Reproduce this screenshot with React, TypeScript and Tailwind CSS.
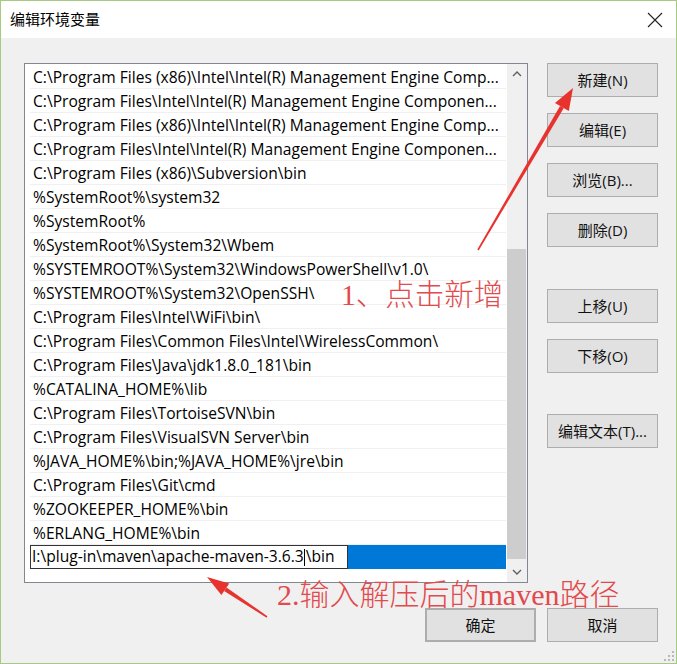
const rows = [
  "C:\\Program Files (x86)\\Intel\\Intel(R) Management Engine Comp...",
  "C:\\Program Files\\Intel\\Intel(R) Management Engine Componen...",
  "C:\\Program Files (x86)\\Intel\\Intel(R) Management Engine Comp...",
  "C:\\Program Files\\Intel\\Intel(R) Management Engine Componen...",
  "C:\\Program Files (x86)\\Subversion\\bin",
  "%SystemRoot%\\system32",
  "%SystemRoot%",
  "%SystemRoot%\\System32\\Wbem",
  "%SYSTEMROOT%\\System32\\WindowsPowerShell\\v1.0\\",
  "%SYSTEMROOT%\\System32\\OpenSSH\\",
  "C:\\Program Files\\Intel\\WiFi\\bin\\",
  "C:\\Program Files\\Common Files\\Intel\\WirelessCommon\\",
  "C:\\Program Files\\Java\\jdk1.8.0_181\\bin",
  "%CATALINA_HOME%\\lib",
  "C:\\Program Files\\TortoiseSVN\\bin",
  "C:\\Program Files\\VisualSVN Server\\bin",
  "%JAVA_HOME%\\bin;%JAVA_HOME%\\jre\\bin",
  "C:\\Program Files\\Git\\cmd",
  "%ZOOKEEPER_HOME%\\bin",
  "%ERLANG_HOME%\\bin",
];

const Btn = ({ label, className = "" }: { label: string; className?: string }) => (
  <button
    type="button"
    className={`flex h-[34px] w-[111px] items-center justify-center border border-[#adadad] bg-[#e1e1e1] text-[15px] text-[#111] ${className}`}
  >
    {label}
  </button>
);

export default function App() {
  return (
    <div
      className="relative flex h-[664px] w-[677px] flex-col border border-[#a5ca80] bg-[#f0f0f0]"
      style={{ fontFamily: '"Open Sans", "Noto Sans CJK SC", sans-serif' }}
    >
      {/* title bar */}
      <div className="flex h-[37px] items-center justify-between bg-white pl-[9px] pr-[13px]">
        <span className="text-[15px] text-black" style={{ fontFamily: '"Noto Sans CJK SC", sans-serif' }}>
          编辑环境变量
        </span>
        <svg width="16" height="16" viewBox="0 0 16 16">
          <path d="M1 1 L15 15 M15 1 L1 15" stroke="#222" strokeWidth="1.1" />
        </svg>
      </div>

      <div className="flex flex-col pl-[23px] pr-[18px] pt-[25px]">
        <div className="flex items-start gap-[19px]">
          {/* list box */}
          <div className="flex h-[520px] w-[504px] border border-[#828790] bg-white">
            <div className="flex flex-1 flex-col overflow-hidden pl-[5px] pr-[1px] pt-[1px]">
              {rows.map((r, i) => (
                <div
                  key={i}
                  className="h-[24px] overflow-hidden whitespace-nowrap border-b border-[#f0f0f0] pl-[3px] text-[15.6px] leading-[24px] text-black"
                >
                  {r}
                </div>
              ))}
              <div className="flex h-[24px] bg-[#0078d7]">
                <div className="flex h-[24px] w-[318px] items-center whitespace-nowrap border border-[#333] bg-white pl-[1px] text-[15.6px] text-black">
                  I:\plug-in\maven\apache-maven-3.6.3
                  <span className="mx-[0.5px] inline-block h-[17px] w-[1px] bg-black" />
                  \bin
                </div>
              </div>
            </div>
            {/* scrollbar */}
            <div className="flex w-[20px] flex-col bg-[#f0f0f0]">
              <div className="flex h-[20px] items-center justify-center">
                <svg width="10" height="6" viewBox="0 0 10 6">
                  <path d="M1 5 L5 1 L9 5" stroke="#606060" strokeWidth="1.4" fill="none" />
                </svg>
              </div>
              <div className="flex-1 pt-[165px]">
                <div className="h-[310px] w-[19px] bg-[#cdcdcd]" />
              </div>
              <div className="flex h-[20px] items-center justify-center">
                <svg width="10" height="6" viewBox="0 0 10 6">
                  <path d="M1 1 L5 5 L9 1" stroke="#606060" strokeWidth="1.4" fill="none" />
                </svg>
              </div>
            </div>
          </div>

          {/* side buttons */}
          <div className="flex flex-col">
            <Btn label="新建(N)" />
            <Btn label="编辑(E)" className="mt-[16px]" />
            <Btn label="浏览(B)..." className="mt-[16px]" />
            <Btn label="删除(D)" className="mt-[16px]" />
            <Btn label="上移(U)" className="mt-[42px]" />
            <Btn label="下移(O)" className="mt-[16px]" />
            <Btn label="编辑文本(T)..." className="mt-[41px]" />
          </div>
        </div>

        <div className="mt-[25px] flex justify-end gap-[11px]">
          <Btn label="确定" className="border-2 border-[#0078d7]" />
          <Btn label="取消" />
        </div>
      </div>

      {/* resize grip */}
      <svg className="absolute bottom-[1px] right-[1px]" width="12" height="12" viewBox="0 0 12 12">
        {[
          [10, 2],
          [10, 6],
          [6, 6],
          [10, 10],
          [6, 10],
          [2, 10],
        ].map(([x, y], i) => (
          <rect key={i} x={x - 1} y={y - 1} width="2" height="2" fill="#b8b8b8" />
        ))}
      </svg>

      {/* annotations */}
      <svg className="pointer-events-none absolute left-[-1px] top-[-1px]" width="677" height="664">
        <polygon points="478.7,250.4 477.3,249.6 560.0,105.9 563.8,108.1" fill="#e8322e" />
        <polygon points="573,88 568.8,111 555,103" fill="#e8322e" />
        <polygon points="267.4,616.3 266.6,617.7 224.1,591 226.5,587.4" fill="#e8322e" />
        <polygon points="207,577 229.2,583.4 221.4,595" fill="#e8322e" />
      </svg>
      <div
        className="pointer-events-none absolute left-[340px] top-[280px] whitespace-nowrap text-[29.5px] font-light leading-[29px] text-[#e24a4d]"
        style={{ fontFamily: '"Liberation Serif", "Noto Sans CJK SC", serif' }}
      >
        1、点击新增
      </div>
      <div
        className="pointer-events-none absolute left-[276px] top-[579px] whitespace-nowrap text-[30px] font-light leading-[30px] text-[#e24a4d]"
        style={{ fontFamily: '"Liberation Serif", "Noto Sans CJK SC", serif' }}
      >
        2.输入解压后的maven路径
      </div>
    </div>
  );
}
